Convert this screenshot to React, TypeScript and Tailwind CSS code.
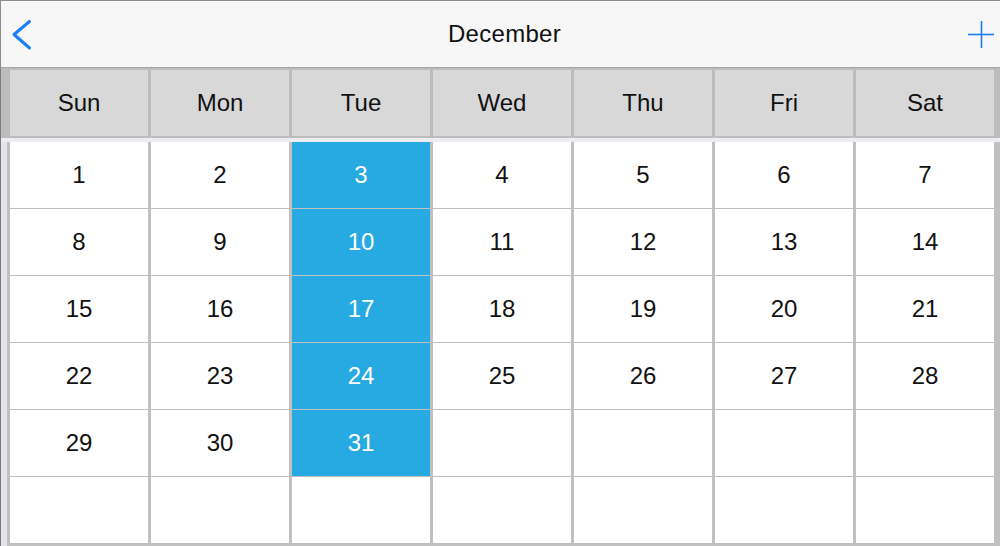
import React from "react";

const weekdays = ["Sun", "Mon", "Tue", "Wed", "Thu", "Fri", "Sat"];

// December starts on a Sunday, 31 days, 6 rows
const cells: (number | null)[] = Array.from({ length: 42 }, (_, i) =>
  i < 31 ? i + 1 : null
);

export default function App() {
  return (
    <div className="w-[1000px] h-[546px] flex flex-col bg-[#c0c0c0] font-['Liberation_Sans',Arial,sans-serif] text-[24px] text-[#111]">
      {/* Header */}
      <div className="h-[68px] box-border flex items-center justify-between bg-[#f7f7f7] border-t border-l border-b border-t-[#8c8c8c] border-l-[#8c8c8c] border-b-[#a6a6a6]">
        <button className="w-[44px] h-full flex items-center">
          <svg width="44" height="66" viewBox="0 0 44 66">
            <polyline
              points="28.5,20.5 13,33.5 28.5,47"
              fill="none"
              stroke="#1a7ef6"
              strokeWidth="3"
              strokeLinecap="round"
              strokeLinejoin="round"
            />
          </svg>
        </button>
        <div className="text-[24px] text-[#111] tracking-[0.3px] pl-[8px]">December</div>
        <button className="w-[44px] h-full flex items-center justify-end">
          <svg width="44" height="66" viewBox="0 0 44 66">
            <line x1="25.5" y1="20" x2="25.5" y2="47" stroke="#1a7ef6" strokeWidth="1.6" />
            <line x1="12" y1="33.5" x2="38" y2="33.5" stroke="#1a7ef6" strokeWidth="1.6" />
          </svg>
        </button>
      </div>

      <div className="flex-1 flex flex-col border-l border-[#7c7c7c]">
        {/* Weekday row */}
        <div className="bg-[#bcbcbc] pt-[2px] pb-[2px] pl-[9px] pr-[6px] grid grid-cols-[repeat(7,138px)] gap-x-[3px]">
          {weekdays.map((d) => (
            <div
              key={d}
              className="h-[66px] flex items-center justify-center bg-[#d8d8d8]"
            >
              {d}
            </div>
          ))}
        </div>
        <div className="h-[4px] bg-[#ececf1]" />

        {/* Days */}
        <div className="flex-1 flex">
          <div className="w-[6px] bg-[#e4e4ea]" />
          <div className="flex-1 pl-[3px] pr-[6px] pb-[3px] grid grid-cols-[repeat(7,138px)] grid-rows-[repeat(6,66px)] gap-x-[3px] gap-y-[1px] bg-[#c0c0c0]">
            {cells.map((n, i) => {
              const selected = i % 7 === 2 && n !== null;
              return (
                <div
                  key={i}
                  className={
                    selected
                      ? "flex items-center justify-center bg-[#27a9e1] text-white"
                      : "flex items-center justify-center bg-white"
                  }
                >
                  {n}
                </div>
              );
            })}
          </div>
        </div>
      </div>
    </div>
  );
}
